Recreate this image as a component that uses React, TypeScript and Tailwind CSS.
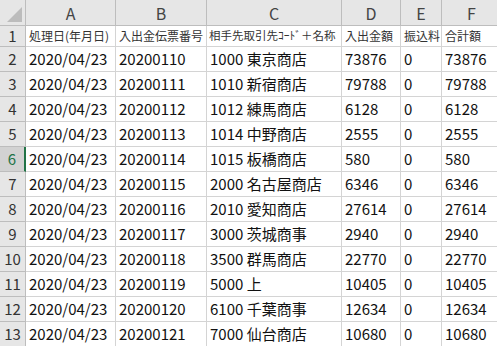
import React from "react";

const cols = ["A", "B", "C", "D", "E", "F"];

const head = ["処理日(年月日)", "入出金伝票番号", "相手先取引先ｺｰﾄﾞ＋名称", "入出金額", "振込料", "合計額"];

const rows: string[][] = [
  ["2020/04/23", "20200110", "1000 東京商店", "73876", "0", "73876"],
  ["2020/04/23", "20200111", "1010 新宿商店", "79788", "0", "79788"],
  ["2020/04/23", "20200112", "1012 練馬商店", "6128", "0", "6128"],
  ["2020/04/23", "20200113", "1014 中野商店", "2555", "0", "2555"],
  ["2020/04/23", "20200114", "1015 板橋商店", "580", "0", "580"],
  ["2020/04/23", "20200115", "2000 名古屋商店", "6346", "0", "6346"],
  ["2020/04/23", "20200116", "2010 愛知商店", "27614", "0", "27614"],
  ["2020/04/23", "20200117", "3000 茨城商事", "2940", "0", "2940"],
  ["2020/04/23", "20200118", "3500 群馬商店", "22770", "0", "22770"],
  ["2020/04/23", "20200119", "5000 上", "10405", "0", "10405"],
  ["2020/04/23", "20200120", "6100 千葉商事", "12634", "0", "12634"],
  ["2020/04/23", "20200121", "7000 仙台商店", "10680", "0", "10680"],
];

export default function App() {
  return (
    <div
      className="w-[497px] h-[346px] overflow-hidden bg-white text-[#111]"
      style={{ fontFamily: "'Noto Sans CJK JP', 'Liberation Sans', sans-serif" }}
    >
      <div className="grid grid-cols-[26px_90px_91px_135px_59px_41px_60px] grid-rows-[26px_21px_repeat(12,25px)]">
        {/* corner */}
        <div className="relative bg-[#e6e6e6] border-r border-b border-[#bdbdbd]">
          <div className="absolute right-[3px] bottom-[3px] w-0 h-0 border-l-[15px] border-l-transparent border-b-[15px] border-b-[#bcbcbc]" />
        </div>
        {cols.map((c) => (
          <div
            key={c}
            className="flex items-center justify-center bg-[#e6e6e6] border-r border-b border-[#bdbdbd] text-[16px] text-[#444]"
          >
            {c}
          </div>
        ))}

        {/* row 1 */}
        <div className="flex items-center justify-center bg-[#e6e6e6] border-r border-b border-[#bdbdbd] text-[15px] text-[#333]">
          1
        </div>
        {head.map((h, i) => (
          <div
            key={i}
            className={
              i === 2
                ? "flex items-center pl-[2px] border-r border-b border-[#d4d4d4] text-[11.5px] text-[#333] whitespace-nowrap overflow-hidden"
                : "flex items-center pl-[3px] border-r border-b border-[#d4d4d4] text-[12px] text-[#333] whitespace-nowrap overflow-hidden"
            }
          >
            {h}
          </div>
        ))}

        {rows.map((r, ri) => {
          const n = ri + 2;
          const sel = n === 6;
          return (
            <React.Fragment key={n}>
              <div
                className={
                  sel
                    ? "flex items-center justify-center bg-[#d2d2d2] border-b border-[#bdbdbd] border-r-2 border-r-[#217346] text-[15px] text-[#217346]"
                    : "flex items-center justify-center bg-[#e6e6e6] border-r border-b border-[#bdbdbd] text-[15px] text-[#333]"
                }
              >
                {n}
              </div>
              {r.map((v, ci) => (
                <div
                  key={ci}
                  className="flex items-center pl-[3px] border-r border-b border-[#d4d4d4] text-[15px] whitespace-nowrap overflow-hidden"
                >
                  {v}
                </div>
              ))}
            </React.Fragment>
          );
        })}
      </div>
    </div>
  );
}
